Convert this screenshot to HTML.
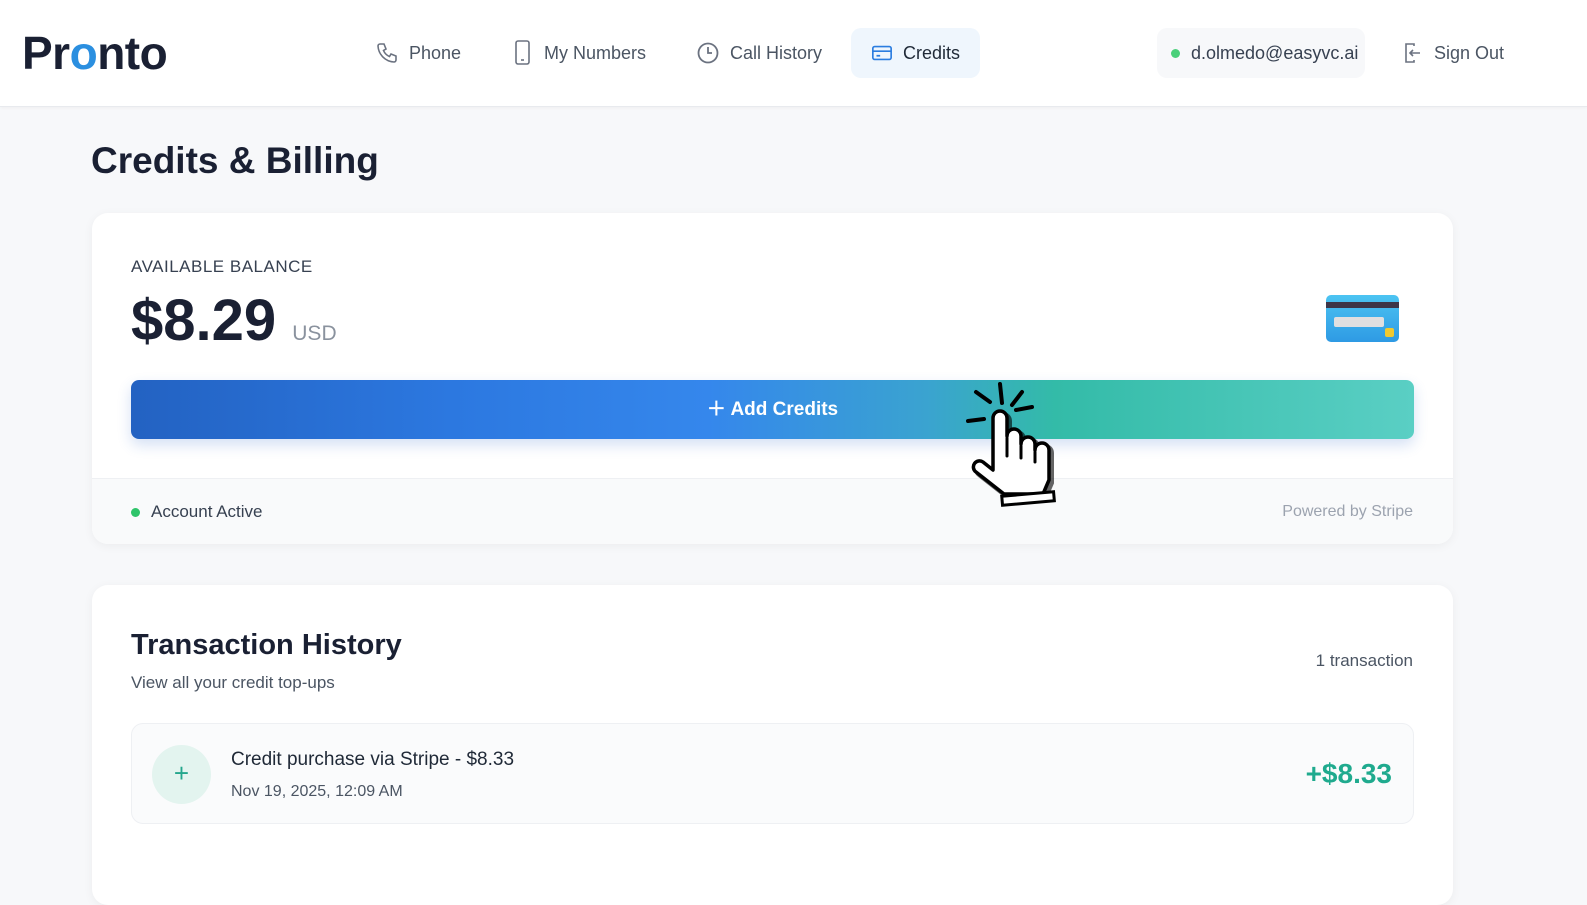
<!DOCTYPE html>
<html><head><meta charset="utf-8"><style>
*{box-sizing:border-box;margin:0;padding:0}
body{width:1587px;height:865px;overflow:hidden;background:#f7f8fa;font-family:"Liberation Sans",sans-serif;color:#1f2937;position:relative}
.hdr{position:absolute;left:0;top:0;width:1587px;height:107px;background:#fff;border-bottom:1px solid #e8eaee;box-shadow:0 1px 3px rgba(0,0,0,.04)}
.logo{position:absolute;left:22px;top:26px;font-size:46px;font-weight:bold;color:#1a2033;letter-spacing:-0.5px}
.logo span{color:#2b8fe0}
.nav{position:absolute;top:28px;height:50px;display:flex;align-items:center;font-size:18px;color:#4b5563}
.nav svg{margin-right:10px}
.pill{background:#eff6fd;border-radius:10px;padding:0 20px;color:#1f2937}
h1{position:absolute;left:91px;top:140px;font-size:37px;font-weight:bold;color:#1a2033}
.card{position:absolute;left:92px;width:1361px;background:#fff;border-radius:16px;box-shadow:0 2px 10px rgba(0,0,0,.05);overflow:hidden}
</style></head><body>
<div class="hdr">
<div class="logo">Pr<span>o</span>nto</div>
<div class="nav" style="left:375px"><svg width="24" height="24" viewBox="0 0 24 24" fill="none" stroke="#6b7280" stroke-width="1.6"><path d="M5 3h4l2 5-2.5 1.5a11 11 0 0 0 6 6L16 13l5 2v4a2 2 0 0 1-2 2A17 17 0 0 1 3 5a2 2 0 0 1 2-2"/></svg>Phone</div>
<div class="nav" style="left:512px"><svg width="22" height="26" viewBox="0 0 22 26" fill="none" stroke="#6b7280" stroke-width="1.6"><rect x="4" y="1" width="13" height="23" rx="2"/><path d="M9 20h3"/></svg>My Numbers</div>
<div class="nav" style="left:696px"><svg width="24" height="24" viewBox="0 0 24 24" fill="none" stroke="#6b7280" stroke-width="1.8"><circle cx="12" cy="12" r="9.5"/><path d="M12 6v6h4"/></svg>Call History</div>
<div class="nav pill" style="left:851px;width:129px"><svg width="24" height="24" viewBox="0 0 24 24" fill="none" stroke="#2b7de0" stroke-width="1.8"><rect x="2" y="5" width="20" height="14" rx="2"/><path d="M2 10h20M6 15h4"/></svg>Credits</div>
<div class="nav" style="left:1157px;width:208px;background:#f7f8fa;border-radius:10px;padding-left:14px;color:#374151"><span style="width:9px;height:9px;border-radius:50%;background:#4ad07a;margin-right:11px"></span>d.olmedo@easyvc.ai</div>
<div class="nav" style="left:1402px"><svg width="22" height="24" viewBox="0 0 22 24" fill="none" stroke="#6b7280" stroke-width="1.6"><path d="M12 5V3H4v18h8v-2M18 12H8m3-3-3 3 3 3"/></svg>Sign Out</div>
</div>
<h1>Credits &amp; Billing</h1>
<div class="card" style="top:213px;height:331px">
<div style="position:absolute;left:39px;top:44px;font-size:17px;color:#374151;letter-spacing:.5px">AVAILABLE BALANCE</div>
<div style="position:absolute;left:39px;top:74px;font-size:58px;font-weight:bold;color:#1a2033">$8.29 <span style="font-size:21px;color:#8a929e;font-weight:normal">USD</span></div>
<div style="position:absolute;left:1234px;top:82px;width:73px;height:47px;border-radius:5px;background:linear-gradient(#4cc4f2,#2e9ae4);overflow:hidden"><div style="margin-top:7px;height:6px;background:#3d3548"></div><div style="position:absolute;left:8px;top:22px;width:50px;height:10px;background:#e0dfe0;border-radius:2px"></div><div style="position:absolute;left:59px;top:33px;width:9px;height:9px;background:#f0c930;border-radius:2px"></div></div>
<div style="position:absolute;left:39px;top:167px;width:1283px;height:59px;border-radius:8px;background:linear-gradient(90deg,#2362c2,#2c78e0 25%,#3587ec 45%,#3aa3d0 62%,#33bba8 72%,#5acfc4);box-shadow:0 6px 14px rgba(40,100,200,.2);color:#fff;font-size:19px;font-weight:bold;text-align:center;line-height:59px">＋ Add Credits</div>
<div style="position:absolute;left:0;top:265px;width:1361px;height:66px;background:#f9fafb;border-top:1px solid #eef0f3">
<div style="position:absolute;left:39px;top:23px;font-size:17px;color:#374151;display:flex;align-items:center"><span style="width:9px;height:9px;border-radius:50%;background:#2fc46a;margin-right:11px"></span>Account Active</div>
<div style="position:absolute;right:40px;top:24px;font-size:16px;color:#9ca3af">Powered by Stripe</div>
</div>
<svg style="position:absolute;left:872px;top:167px;overflow:visible" width="100" height="130" viewBox="0 0 100 130"><g stroke="#000" stroke-width="4" stroke-linecap="round"><path d="M4 41l16-2M12 12l14 10M36 4l2 19M58 12l-10 13M68 27l-16 3"/></g>
<g transform="translate(3 3)" fill="#000" stroke="#000" stroke-width="4" opacity=".6"><path d="M29 90V38a7 7 0 0 1 14 0V56a7 7 0 0 1 14 0V64a7 7 0 0 1 14 0V70a7 7 0 0 1 14 0V100l-6 14H40L12 92a6 6 0 0 1 7-10l10 8z"/></g>
<path d="M29 90V38a7 7 0 0 1 14 0V56a7 7 0 0 1 14 0V64a7 7 0 0 1 14 0V70a7 7 0 0 1 14 0V100l-6 14H40L12 92a6 6 0 0 1 7-10l10 8z" fill="#fff" stroke="#000" stroke-width="3.5" stroke-linejoin="round"/>
<path d="M43 58V76M57 66V78M71 72V82" stroke="#000" stroke-width="3" stroke-linecap="round"/>
<rect x="38" y="114" width="52" height="9" fill="#fff" stroke="#000" stroke-width="3" transform="rotate(-5 64 118)"/></svg>
</div>
<div class="card" style="top:585px;height:320px">
<div style="position:absolute;left:39px;top:44px;font-size:29px;font-weight:bold;color:#1a2033">Transaction History</div>
<div style="position:absolute;left:39px;top:88px;font-size:17px;color:#4b5563">View all your credit top-ups</div>
<div style="position:absolute;right:40px;top:66px;font-size:17px;color:#4b5563">1 transaction</div>
<div style="position:absolute;left:39px;top:138px;width:1283px;height:101px;border:1px solid #eef0f3;border-radius:12px;background:#fafbfc">
<div style="position:absolute;left:20px;top:21px;width:59px;height:59px;border-radius:50%;background:#e3f4ef;color:#24a68c;font-size:26px;text-align:center;line-height:57px">+</div>
<div style="position:absolute;left:99px;top:25px;font-size:19px;color:#1f2937">Credit purchase via Stripe - $8.33</div>
<div style="position:absolute;left:99px;top:59px;font-size:16px;color:#4b5563">Nov 19, 2025, 12:09 AM</div>
<div style="position:absolute;right:21px;top:34px;font-size:28px;font-weight:bold;color:#1faa8e">+$8.33</div>
</div>
</div>
</body></html>
